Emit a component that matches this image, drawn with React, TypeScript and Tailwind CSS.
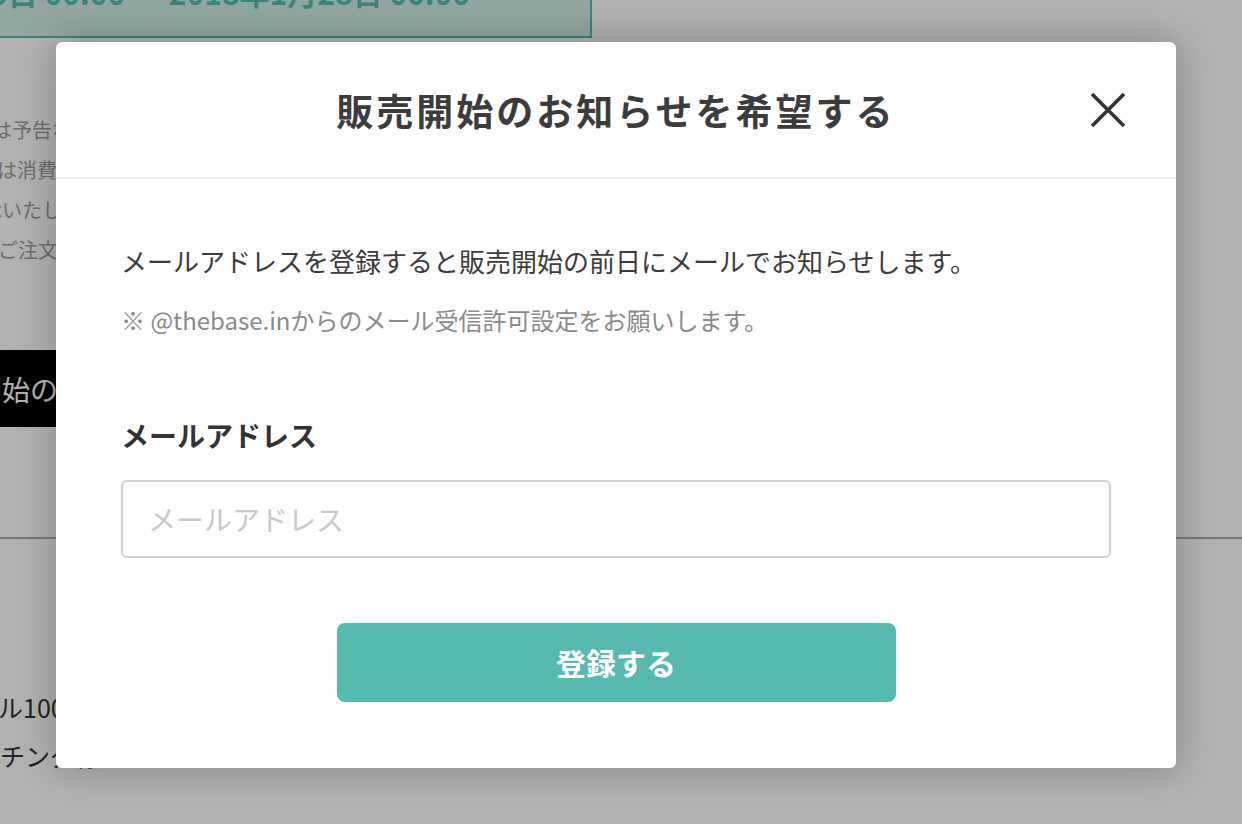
import React from 'react';

const jp = "font-['Noto_Sans_CJK_JP','Noto_Sans',sans-serif]";

function BackgroundPage() {
  return (
    <div className="flex flex-col text-[#9d9d9d]">
      <div className="mt-[-40px] ml-[-10px] flex h-[78px] w-[602px] items-start justify-end border-2 border-[#53c1b3] bg-[#d1f0e9] pr-[120px] pt-[12px]">
        <span className="whitespace-nowrap text-[30px] font-bold leading-[36px] text-[#53c1b3]">
          2018年1月20日 00:00 〜 2018年1月28日 00:00
        </span>
      </div>
      <div className="mt-[72px] flex flex-col text-[20px] leading-[40px]">
        <p className="ml-[-68px] whitespace-nowrap">※価格は予告なく変更する場合があります。</p>
        <p className="ml-[-63px] whitespace-nowrap">※価格は消費税込みの金額です。</p>
        <p className="ml-[-78px] whitespace-nowrap">※ご了承いたします。</p>
        <p className="ml-[-22px] whitespace-nowrap">※ご注文後のキャンセルはできません。</p>
      </div>
      <div className="mt-[80px] flex h-[77px] w-[600px] items-center bg-black pl-[2px]">
        <span className="ml-[-84px] whitespace-nowrap text-[28px] text-white">販売開始のお知らせを希望する</span>
      </div>
      <div className="mt-[110px] h-[2px] w-full bg-[#aeaeae]" />
      <div className="mt-[144px] flex flex-col text-[25px] leading-[48px] text-[#333]">
        <p className="ml-[-77px] whitespace-nowrap">トータル100cm</p>
        <p className="ml-[-50px] whitespace-nowrap">マッチング様式について</p>
      </div>
    </div>
  );
}

function CloseIcon() {
  return (
    <svg width="36" height="36" viewBox="0 0 36 36" fill="none" stroke="#333" strokeWidth="3.5" strokeLinecap="butt">
      <line x1="2" y1="2" x2="34" y2="34" />
      <line x1="34" y1="2" x2="2" y2="34" />
    </svg>
  );
}

function NotifyModal() {
  return (
    <div className="absolute left-[56px] top-[42px] flex h-[726px] w-[1120px] flex-col rounded-[6px] bg-white shadow-[0_0_40px_rgba(0,0,0,0.25)]">
      <div className="relative flex h-[137px] items-center justify-center border-b-2 border-[#efefef]">
        <h2 className="pt-[2px] text-[37px] font-bold tracking-[3px] text-[#3c3c3c]">販売開始のお知らせを希望する</h2>
        <button className="absolute right-[50px] top-[50px] flex">
          <CloseIcon />
        </button>
      </div>
      <div className="flex flex-col px-[65px] pb-[65px] pt-[62px]">
        <p className="text-[26px] leading-[40px] text-[#3c3c3c]">
          メールアドレスを登録すると販売開始の前日にメールでお知らせします。
        </p>
        <p className="mt-[21px] text-[24px] leading-[36px] text-[#8a8a8a]">
          ※ @thebase.inからのメール受信許可設定をお願いします。
        </p>
        <label className="mt-[77px] text-[28px] font-bold leading-[40px] text-[#333]">メールアドレス</label>
        <input
          type="email"
          placeholder="メールアドレス"
          className="mt-[25px] h-[78px] w-full rounded-[6px] border-2 border-[#d2d2d2] px-[25px] text-[28px] text-[#333] outline-none placeholder:text-[#c8c8cd]"
        />
        <div className="mt-[65px] flex justify-center">
          <button className="flex h-[79px] w-[559px] items-center justify-center rounded-[8px] bg-[#57bab0] text-[30px] font-bold text-white">
            登録する
          </button>
        </div>
      </div>
    </div>
  );
}

export default function App() {
  return (
    <div className={`relative h-[824px] w-full overflow-hidden bg-white ${jp}`}>
      <BackgroundPage />
      <div className="absolute inset-0 bg-black/30" />
      <NotifyModal />
    </div>
  );
}
